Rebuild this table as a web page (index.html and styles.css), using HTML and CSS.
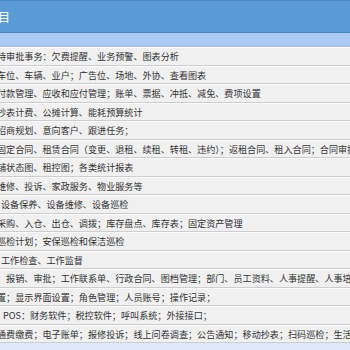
FILE: index.html
```html
<!DOCTYPE html>
<html lang="zh-CN">
<head>
    <meta charset="UTF-8">
    <meta name="viewport" content="width=device-width, initial-scale=1.0">
    <title>功能项目</title>
    <link rel="stylesheet" href="styles.css">
</head>
<body>
    <div class="table">
        <div class="caption"><span class="title">项目</span></div>
        <div class="subhead"></div>

        <!-- 功能列表 -->
        <div class="row"><span class="cell cut">待审批事务：欠费提醒、业务预警、图表分析</span></div>
        <div class="row"><span class="cell cut">车位、车辆、业户；广告位、场地、外协、查看图表</span></div>
        <div class="row"><span class="cell cut">付款管理、应收和应付管理；账单、票据、冲抵、减免、费项设置</span></div>
        <div class="row"><span class="cell cut">抄表计费、公摊计算、能耗预算统计</span></div>
        <div class="row"><span class="cell cut">招商规划、意向客户、跟进任务；</span></div>
        <div class="row"><span class="cell cut">固定合同、租赁合同（变更、退租、续租、转租、违约）；返租合同、租入合同；合同审批</span></div>
        <div class="row"><span class="cell cut">铺状态图、租控图；各类统计报表</span></div>
        <div class="row"><span class="cell cut">维修、投诉、家政服务、物业服务等</span></div>
        <div class="row"><span class="cell">设备保养、设备维修、设备巡检</span></div>
        <div class="row"><span class="cell cut">采购、入仓、出仓、调拨；库存盘点、库存表；固定资产管理</span></div>
        <div class="row"><span class="cell cut">巡检计划；安保巡检和保洁巡检</span></div>
        <div class="row"><span class="cell">工作检查、工作监督</span></div>
        <div class="row"><span class="cell cut">、报销、审批；工作联系单、行政合同、图档管理；部门、员工资料、人事提醒、人事培训</span></div>
        <div class="row"><span class="cell cut">置；显示界面设置；角色管理；人员账号；操作记录；</span></div>
        <div class="row"><span class="cell pos">POS：财务软件；税控软件；呼叫系统；外接接口；</span></div>
        <div class="row"><span class="cell cut">通费缴费；电子账单；报修投诉；线上问卷调查；公告通知；移动抄表；扫码巡检；生活服务</span></div>
    </div>
</body>
</html>
```

FILE: styles.css
```css
body {
    margin: 0;
    font-family: "Noto Sans CJK SC", "Noto Sans", sans-serif;
    background: #dde9f8;
    width: 350px;
    height: 350px;
    overflow: hidden;
}
.table {
    width: 350px;
    overflow: hidden;
}
.caption {
    height: 31px;
    background: #5b9bd5;
    border-top: 1px solid #4a86c4;
    border-bottom: 1px solid #4a82bd;
    display: flex;
    align-items: center;
}
.caption .title {
    color: #ffffff;
    font-size: 12px;
    margin-left: -14px;
    white-space: nowrap;
}
.subhead {
    height: 13px;
    background: #a9caf3;
    border-bottom: 1px solid #b5bfcc;
}
.row {
    height: 16.5px;
    background: #f0f0f0;
    border-top: 1px solid #fbfbfb;
    border-bottom: 1px solid #cdcdcd;
    display: flex;
    align-items: center;
    overflow: hidden;
}
.cell {
    color: #333333;
    font-size: 9.1px;
    white-space: nowrap;
    padding-left: 1px;
}
.cell.cut {
    margin-left: -4px;
}
.cell.pos {
    padding-left: 3px;
}
```
